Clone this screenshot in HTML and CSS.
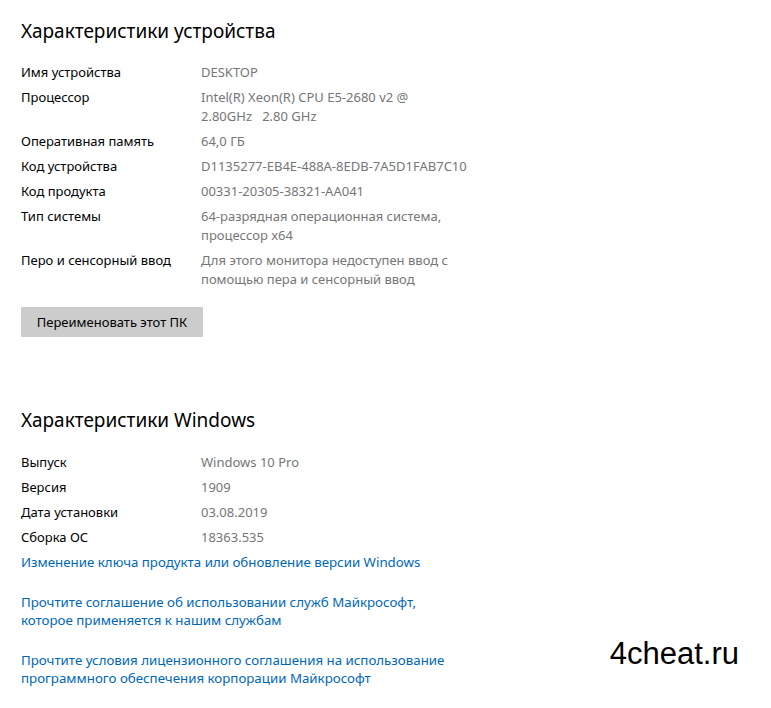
FILE: index.html
```html
<!DOCTYPE html>
<html lang="ru">

<head>
    <meta charset="utf-8">
    <title>О системе</title>
    <link rel="stylesheet" href="styles.css">
</head>

<body>
    <div class="page">
        <h2>Характеристики устройства</h2>

        <dl class="specs">
            <dt>Имя устройства</dt>
            <dd>DESKTOP</dd>
            <dt>Процессор</dt>
            <dd>Intel(R) Xeon(R) CPU E5-2680 v2 @<br>2.80GHz&nbsp;&nbsp;&nbsp;2.80 GHz</dd>
            <dt>Оперативная память</dt>
            <dd>64,0 ГБ</dd>
            <dt>Код устройства</dt>
            <dd>D1135277-EB4E-488A-8EDB-7A5D1FAB7C10</dd>
            <dt>Код продукта</dt>
            <dd>00331-20305-38321-AA041</dd>
            <dt>Тип системы</dt>
            <dd>64-разрядная операционная система,<br>процессор x64</dd>
            <dt>Перо и сенсорный ввод</dt>
            <dd>Для этого монитора недоступен ввод с<br>помощью пера и сенсорный ввод</dd>
        </dl>

        <button class="rename">Переименовать этот ПК</button>

        <h2 class="second">Характеристики Windows</h2>

        <dl class="specs">
            <dt>Выпуск</dt>
            <dd>Windows 10 Pro</dd>
            <dt>Версия</dt>
            <dd>1909</dd>
            <dt>Дата установки</dt>
            <dd>03.08.2019</dd>
            <dt>Сборка ОС</dt>
            <dd>18363.535</dd>
        </dl>

        <div class="links">
            <a href="#">Изменение ключа продукта или обновление версии Windows</a>
            <a href="#">Прочтите соглашение об использовании служб Майкрософт,<br>которое применяется к нашим службам</a>
            <div class="last-row">
                <a href="#">Прочтите условия лицензионного соглашения на использование<br>программного обеспечения корпорации Майкрософт</a>
                <span class="watermark">4cheat.ru</span>
            </div>
        </div>
    </div>
</body>

</html>
```

FILE: styles.css
```css
body {
    margin: 0;
    background: #fff;
    font-family: 'Noto Sans', 'Open Sans', sans-serif;
    color: #000;
}

.page {
    padding: 17px 21px 0 21px;
}

h2 {
    margin: 0;
    font-size: 19px;
    font-weight: normal;
    line-height: 28px;
}

h2.second {
    margin-top: 69px;
}

.specs {
    display: grid;
    grid-template-columns: 180px auto;
    row-gap: 6px;
    margin: 18px 0 0 0;
    font-size: 13px;
    line-height: 19px;
}

.specs dt,
.specs dd {
    margin: 0;
}

.specs dd {
    color: #767676;
}

h2.second + .specs {
    margin-top: 19px;
}

.rename {
    display: block;
    margin-top: 18px;
    width: 182px;
    height: 30px;
    padding: 0;
    border: none;
    background: #ccc;
    font-family: inherit;
    font-size: 13px;
    color: #000;
}

.links {
    display: flex;
    flex-direction: column;
    gap: 22px;
    margin-top: 6px;
    font-size: 13.3px;
    line-height: 18px;
}

.links a {
    color: #0067b8;
    text-decoration: none;
}

.last-row {
    display: flex;
    justify-content: space-between;
    align-items: flex-start;
}

.watermark {
    margin: -14px 11px 0 0;
    font-family: 'Liberation Sans', Arial, sans-serif;
    font-size: 31px;
    line-height: 34px;
    color: #000;
}
```
